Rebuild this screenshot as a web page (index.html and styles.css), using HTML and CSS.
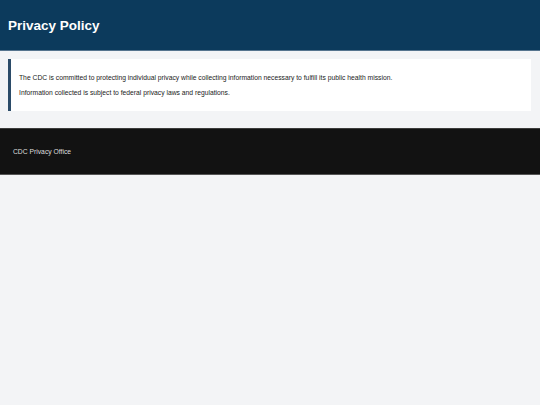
FILE: index.html
```html
<!DOCTYPE html>
<html lang="en">
<head>
  <meta charset="UTF-8">
  <title>Privacy Policy</title>
  <link rel="stylesheet" href="styles.css">
</head>
<body>
  <header class="site-header">
    <h1>Privacy Policy</h1>
  </header>

  <main class="content">
    <section class="notice">
      <p>The CDC is committed to protecting individual privacy while collecting information necessary to fulfill its public health mission.</p>
      <p>Information collected is subject to federal privacy laws and regulations.</p>
    </section>
  </main>

  <footer class="site-footer">
    <p>CDC Privacy Office</p>
  </footer>
</body>
</html>
```

FILE: styles.css
```css
body {
  margin: 0;
  font-family: "Liberation Sans", Arial, sans-serif;
  background: #f3f4f6;
  color: #222;
}
.site-header {
  background: #0c3a5c;
  border-bottom: 1px solid #56748e;
  height: 50px;
  padding: 0 8px;
  display: flex;
  align-items: center;
}
.site-header h1 {
  margin: 0;
  font-size: 13.5px;
  color: #fff;
}
.content {
  padding: 8px 9px 17px 8px;
}
.notice {
  background: #fff;
  border-left: 3px solid #2b4b68;
  padding: 8px 8px 7px;
  font-size: 6.75px;
  line-height: 8px;
}
.notice p {
  margin: 7px 0;
}
.site-footer {
  background: #121212;
  border-top: 1px solid #3c3c3c;
  border-bottom: 1px solid #555;
  height: 45px;
  padding: 0 13px;
  display: flex;
  align-items: center;
  color: #ddd;
  font-size: 6.75px;
}
.site-footer p {
  margin: 0;
}
```
